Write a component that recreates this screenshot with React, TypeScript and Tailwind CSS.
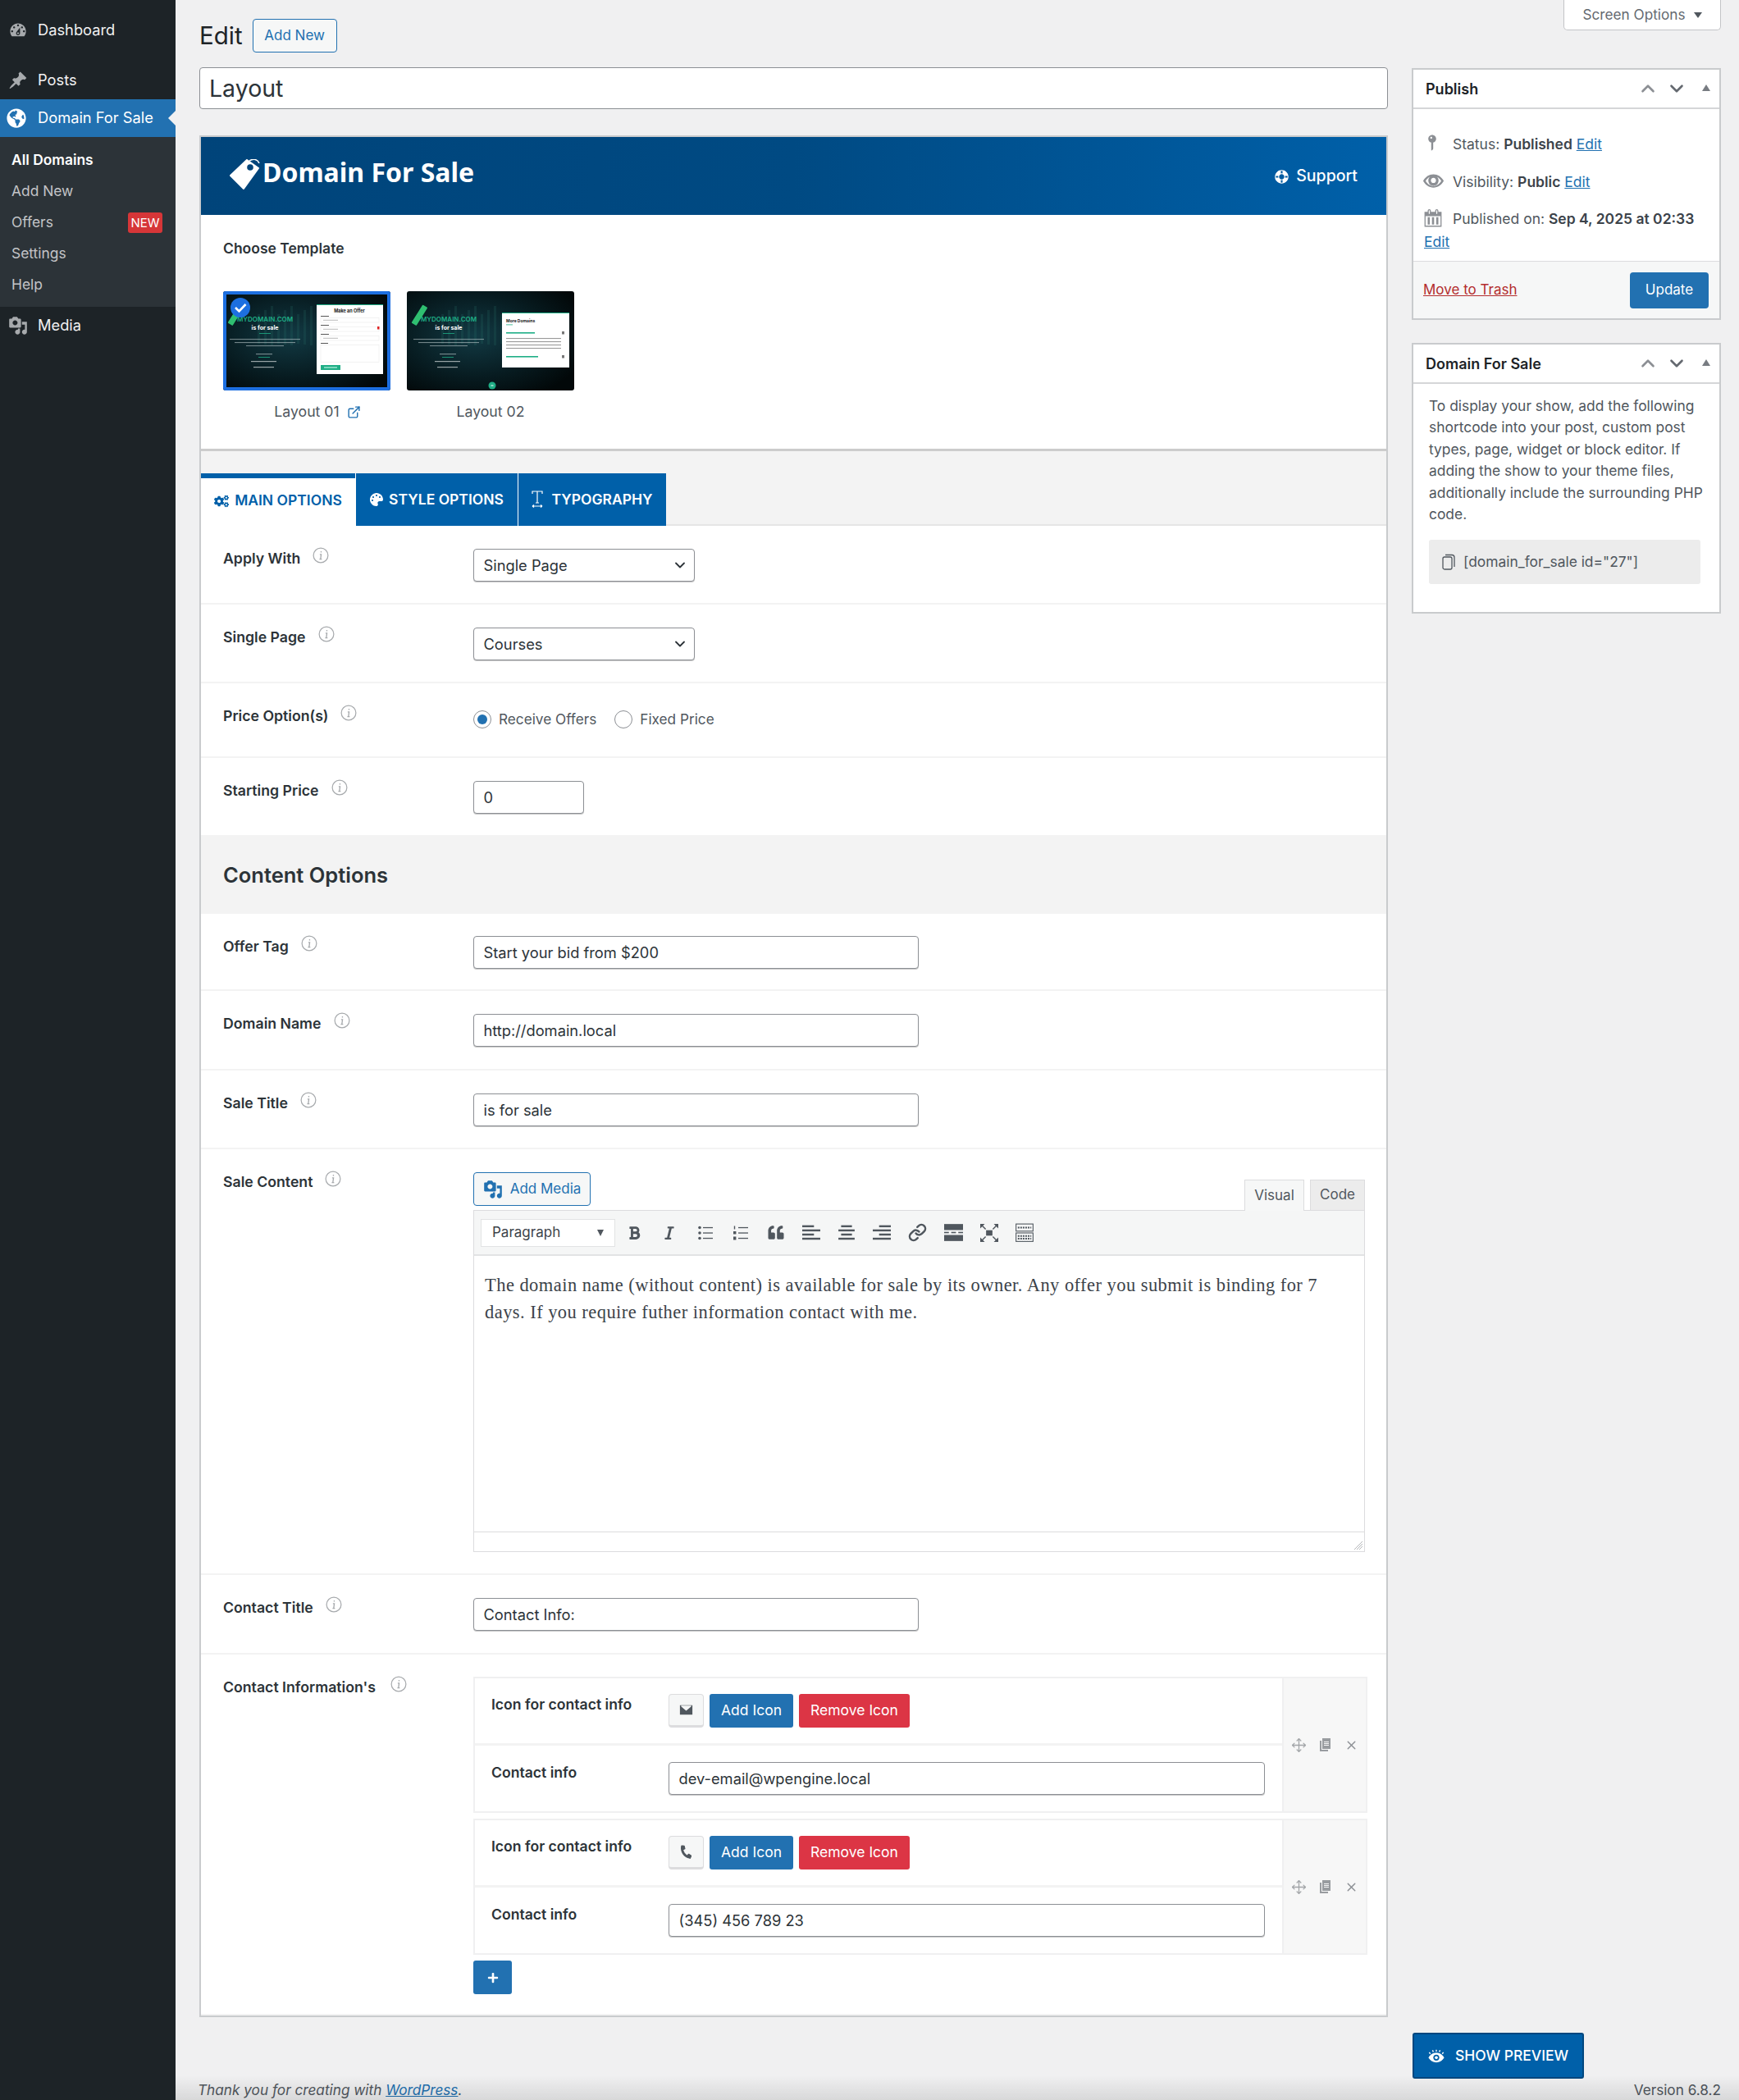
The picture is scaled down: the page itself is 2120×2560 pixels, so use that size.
import { ReactNode } from "react";
import { FaGlobeAmericas, FaLifeRing, FaCogs, FaPalette, FaQuoteLeft, FaBold, FaItalic, FaPlus, FaPhone } from "react-icons/fa";
import { ChevronDown, ChevronUp, ExternalLink, Link as LinkIcon, Move, X } from "lucide-react";

const dashPaths = {
  dashboard:
    "M3.76 16h12.48c1.1-1.37 1.76-3.11 1.76-5 0-4.42-3.58-8-8-8s-8 3.58-8 8c0 1.89.66 3.63 1.76 5zM10 4c.55 0 1 .45 1 1s-.45 1-1 1-1-.45-1-1 .45-1 1-1zM6 6c.55 0 1 .45 1 1s-.45 1-1 1-1-.45-1-1 .45-1 1-1zm8 0c.55 0 1 .45 1 1s-.45 1-1 1-1-.45-1-1 .45-1 1-1zm-5.37 5.55L12 7v6c0 1.1-.9 2-2 2s-2-.9-2-2c0-.57.24-1.08.63-1.45zM4 10c.55 0 1 .45 1 1s-.45 1-1 1-1-.45-1-1 .45-1 1-1zm12 0c.55 0 1 .45 1 1s-.45 1-1 1-1-.45-1-1 .45-1 1-1zm-5 3c0-.55-.45-1-1-1s-1 .45-1 1 .45 1 1 1 1-.45 1-1z",
  post: "M10.44 3.02l1.82-1.82 6.36 6.35-1.83 1.82c-1.05-.68-2.48-.57-3.41.36l-.75.75c-.92.93-1.04 2.35-.35 3.41l-1.83 1.82-2.41-2.41-2.8 2.79c-.42.42-3.38 2.71-3.8 2.29s1.86-3.39 2.28-3.81l2.79-2.79L4.1 9.36l1.83-1.82c1.05.69 2.48.57 3.4-.36l.75-.75c.93-.92 1.05-2.35.36-3.41z",
  media:
    "M13 11V4c0-.55-.45-1-1-1h-1.67L9 1H5L3.67 3H2c-.55 0-1 .45-1 1v7c0 .55.45 1 1 1h10c.55 0 1-.45 1-1zM7 4.5c1.38 0 2.5 1.12 2.5 2.5S8.38 9.5 7 9.5 4.5 8.38 4.5 7 5.62 4.5 7 4.5zM14 6h5v10.5c0 1.38-1.12 2.5-2.5 2.5S14 17.88 14 16.5s1.12-2.5 2.5-2.5c.17 0 .34.02.5.05V9h-3V6zm-4 8.05V13h2v3.5c0 1.38-1.12 2.5-2.5 2.5S7 17.88 7 16.5 8.12 14 9.5 14c.17 0 .34.02.5.05z",
  pin: "M14 6c0 1.86-1.28 3.41-3 3.86V16c0 1-2 2-2 2V9.86c-1.72-.45-3-2-3-3.86 0-2.21 1.79-4 4-4s4 1.79 4 4zM8 5c0 .55.45 1 1 1s1-.45 1-1-.45-1-1-1-1 .45-1 1z",
  eye: "M19.7 9.4C17.7 6 14.32 3.5 10 3.5S2.3 6 .3 9.4L0 10l.3.6c2 3.4 5.38 5.9 9.7 5.9s7.7-2.5 9.7-5.9l.3-.6zM10 15c-3.1 0-5.9-1.9-7.6-5 1-1.8 2.4-3.2 4.1-4.1-.9.9-1.5 2.2-1.5 3.6C5 12.5 7.2 14.7 10 14.7s5-2.2 5-5.2c0-1.4-.6-2.7-1.5-3.6 1.7.9 3.1 2.3 4.1 4.1-1.7 3.1-4.5 5-7.6 5zM10 12c-1.5 0-2.5-1.1-2.5-2.5S8.5 7 10 7s2.5 1.1 2.5 2.5S11.5 12 10 12z",
  calendar:
    "M15 4h3v14H2V4h3V3c0-.83.67-1.5 1.5-1.5S8 2.17 8 3v1h4V3c0-.83.67-1.5 1.5-1.5S15 2.17 15 3v1zM6 3v2.5c0 .28.22.5.5.5S7 5.78 7 5.5V3c0-.28-.22-.5-.5-.5S6 2.72 6 3zm7 0v2.5c0 .28.22.5.5.5s.5-.22.5-.5V3c0-.28-.22-.5-.5-.5s-.5.22-.5.5zm4 14V8H3v9h14zM7 16V9H5v7h2zm4 0V9H9v7h2zm4 0V9h-2v7h2z",
  copy: "M6 15V2h10v13H6zm-1 1h8v2H3V5h2v11zM8 7h6V6H8v1zm0 2h6V8H8v1zm0 2h6v-1H8v1z",
};

function Dash({ d, className }: { d: string; className?: string }) {
  return (
    <svg viewBox="0 0 20 20" fill="currentColor" className={className}>
      <path d={d} />
    </svg>
  );
}

function InfoIcon() {
  return (
    <svg viewBox="0 0 18 18" className="w-[20px] h-[20px] text-[#a7aaad]" fill="none" stroke="currentColor">
      <circle cx="9" cy="9" r="8" strokeWidth="1.1" />
      <path d="M9.4 4.4v1.4M8 8h1.5l-.7 5.2H7.6M8.8 13.2h1.4" strokeWidth="1.2" />
    </svg>
  );
}

function Bars({ rows }: { rows: [number, number][] }) {
  return (
    <svg viewBox="0 0 20 20" className="w-[22px] h-[22px]" fill="#50575e">
      {rows.map(([x, w], i) => (
        <rect key={i} x={x} y={1.5 + i * 4.6} width={w} height="2.2" />
      ))}
    </svg>
  );
}

function ToolbarIcons() {
  return (
    <div className="flex items-center text-[#50575e]">
      <div className="w-[30px] flex justify-center"><FaBold className="w-[15px] h-[18px]" /></div>
      <div className="w-[12px]" />
      <div className="w-[32px] flex justify-center"><FaItalic className="w-[14px] h-[18px]" /></div>
      <div className="w-[43px] flex justify-center ml-[6px]">
        <svg viewBox="0 0 20 20" className="w-[20px] h-[20px]" fill="#50575e">
          <circle cx="3" cy="3.5" r="1.8" /><circle cx="3" cy="10" r="1.8" /><circle cx="3" cy="16.5" r="1.8" />
          <rect x="7" y="2.9" width="12" height="1.3" /><rect x="7" y="9.4" width="12" height="1.3" /><rect x="7" y="15.9" width="12" height="1.3" />
        </svg>
      </div>
      <div className="w-[43px] flex justify-center">
        <svg viewBox="0 0 20 20" className="w-[20px] h-[20px]" fill="#50575e">
          <rect x="1.8" y="1.5" width="1.4" height="4" /><rect x="1" y="8" width="3.4" height="3.5" /><rect x="1" y="14.5" width="3.4" height="4" />
          <rect x="7" y="2.9" width="12" height="1.3" /><rect x="7" y="9.4" width="12" height="1.3" /><rect x="7" y="15.9" width="12" height="1.3" />
        </svg>
      </div>
      <div className="w-[43px] flex justify-center"><FaQuoteLeft className="w-[22px] h-[19px]" /></div>
      <div className="w-[43px] flex justify-center"><Bars rows={[[0, 13], [0, 20], [0, 13], [0, 20]]} /></div>
      <div className="w-[43px] flex justify-center"><Bars rows={[[4, 12], [1, 18], [4, 12], [1, 18]]} /></div>
      <div className="w-[43px] flex justify-center"><Bars rows={[[7, 13], [0, 20], [7, 13], [0, 20]]} /></div>
      <div className="w-[44px] flex justify-center"><LinkIcon className="w-[23px] h-[23px]" strokeWidth={2.6} /></div>
      <div className="w-[44px] flex justify-center">
        <svg viewBox="0 0 20 20" className="w-[23px] h-[23px]" fill="#50575e">
          <rect x="0" y="1" width="20" height="6.4" /><rect x="0" y="9.3" width="5" height="1.4" /><rect x="7.5" y="9.3" width="5" height="1.4" /><rect x="15" y="9.3" width="5" height="1.4" /><rect x="0" y="12.6" width="20" height="6.4" />
        </svg>
      </div>
      <div className="w-[43px] flex justify-center">
        <svg viewBox="0 0 20 20" className="w-[22px] h-[22px]" fill="#50575e" stroke="#50575e">
          <rect x="6.5" y="7" width="7" height="6" stroke="none" />
          <path d="M1 1l5 5M19 1l-5 5M1 19l5-5M19 19l-5-5" strokeWidth="1.3" fill="none" />
          <path d="M0 0h5L0 5zM20 0h-5l5 5zM0 20h5l-5-5zM20 20h-5l5-5z" stroke="none" />
        </svg>
      </div>
      <div className="w-[43px] flex justify-center">
        <svg viewBox="0 0 20 22" className="w-[22px] h-[24px]" fill="none" stroke="#50575e">
          <rect x="0.5" y="1" width="19" height="8" strokeWidth="1" />
          <rect x="0.5" y="11" width="19" height="9.5" strokeWidth="1" />
          <path d="M2.5 5h15M2.5 14.5h15M2.5 17.5h15" strokeWidth="1.8" strokeDasharray="1.8 1" />
        </svg>
      </div>
    </div>
  );
}

function Thumb({ kind, selected }: { kind: 1 | 2; selected?: boolean }) {
  return (
    <svg viewBox="0 0 204 121" className={`w-[204px] h-[121px] rounded-[3px] ${selected ? "outline-[4px] -outline-offset-4 outline-[#1d6fe0]" : ""}`}>
      <defs>
        <radialGradient id={`sc${kind}`} cx="0.4" cy="0.45" r="0.7">
          <stop offset="0" stopColor="#123a44" />
          <stop offset="0.6" stopColor="#071b20" />
          <stop offset="1" stopColor="#020809" />
        </radialGradient>
      </defs>
      <rect width="204" height="121" fill={`url(#sc${kind})`} />
      {[42, 50, 58, 66, 74, 82, 90, 98, 106, 114].map((x, i) => (
        <rect key={x} x={x} y={28 - (i % 3) * 5} width="3" height={36 + (i % 3) * 6} fill="#2a7c70" opacity="0.18" />
      ))}
      <rect x="2" y="26" width="26" height="7" rx="1" fill="#2fbf71" transform="rotate(-58 15 29)" />
      <text x="51" y="37" textAnchor="middle" fontSize="8" fontWeight="600" fill="#1fae86">MYDOMAIN.COM</text>
      <text x="51" y="47" textAnchor="middle" fontSize="7" fontWeight="700" fill="#ffffff">is for sale</text>
      <rect x="44" y="51" width="14" height="0.8" fill="#1fae86" />
      {[[8, 86, 58], [14, 74, 62], [28, 46, 66]].map(([x, w, y]) => (
        <rect key={y} x={x} y={y} width={w} height="1.1" fill="#b9c6c8" opacity="0.6" />
      ))}
      <rect x="40" y="76" width="20" height="1.2" fill="#b9c6c8" opacity="0.6" />
      <rect x="43" y="80" width="14" height="0.8" fill="#1fae86" />
      <rect x="34" y="85" width="31" height="1.2" fill="#d5dcdc" opacity="0.7" />
      <rect x="37" y="92" width="25" height="1.2" fill="#d5dcdc" opacity="0.7" />
      {kind === 1 ? (
        <>
          <rect x="114" y="16" width="81" height="85" fill="#ffffff" />
          <rect x="114" y="16" width="81" height="1" fill="#1fae86" />
          <text x="154" y="26" textAnchor="middle" fontSize="5.5" fontWeight="700" fill="#222222">Make an Offer</text>
          {[30, 41, 52].map((y) => (
            <g key={y}>
              <rect x="119" y={y} width="10" height="1" fill="#555555" />
              <rect x="119" y={y + 2.5} width="71" height="5.5" fill="none" stroke="#e5e5e5" strokeWidth="0.5" />
              <rect x="122" y={y + 4.8} width="18" height="1" fill="#bbbbbb" />
            </g>
          ))}
          <rect x="188" y="43" width="2.5" height="3.5" fill="#e02424" />
          <rect x="119" y="63" width="9" height="1" fill="#555555" />
          <rect x="119" y="65.5" width="71" height="21" fill="none" stroke="#e5e5e5" strokeWidth="0.5" />
          <rect x="119" y="90" width="24" height="6" fill="#1fae86" />
          <rect x="123" y="92.5" width="16" height="1" fill="#d8fff2" />
          <circle cx="21" cy="20" r="12" fill="#1d6fe0" />
        </>
      ) : (
        <>
          <rect x="116" y="26" width="82" height="67" fill="#ffffff" />
          <rect x="116" y="26" width="82" height="1" fill="#1fae86" />
          <text x="121" y="38" fontSize="5" fontWeight="700" fill="#222222">More Domains</text>
          <rect x="121" y="40.5" width="8" height="0.8" fill="#1fae86" />
          <rect x="121" y="50" width="35" height="1.6" fill="#1fae86" />
          <rect x="189" y="49" width="3" height="3.5" fill="#777777" />
          {[57, 61, 65, 69].map((y) => (
            <rect key={y} x="121" y={y} width="67" height="1.1" fill="#999999" />
          ))}
          <rect x="121" y="79" width="39" height="1.6" fill="#1fae86" />
          <rect x="189" y="78" width="3" height="3.5" fill="#777777" />
          <circle cx="104" cy="115" r="4.5" fill="#1fae86" />
          <rect x="102.5" y="114.5" width="3" height="1" fill="#ffffff" />
        </>
      )}
      {selected && <path d="M15 20l4.5 4.5 8-8.5" fill="none" stroke="#ffffff" strokeWidth="2.6" />}
    </svg>
  );
}

const inputCls =
  "block h-[40px] rounded-[4px] border border-[#8c8f94] bg-white px-[11.5px] text-[18.3px] leading-[38px] text-[#2c3338] shadow-[0_1px_0_#c9c9c9]";

function SelectBox({ value }: { value: string }) {
  return (
    <div className={`${inputCls} w-[270px] flex items-center justify-between`}>
      <span>{value}</span>
      <ChevronDown className="w-[20px] h-[20px] text-[#2c3338] -mr-[4px]" strokeWidth={2.2} />
    </div>
  );
}

function Field({ value, wide }: { value: string; wide?: boolean }) {
  return <div className={`${inputCls} ${wide ? "w-[727px]" : "w-[543px]"}`}>{value}</div>;
}

function Row({ label, infoGap = "ml-[15px]", className, children }: { label: string; infoGap?: string; className: string; children: ReactNode }) {
  return (
    <div className={`flex border-b-[2px] border-[#f3f3f3] pl-[27px] pt-[28px] ${className}`}>
      <div className="w-[305px] flex items-start shrink-0 -mt-[1px]">
        <span className="text-[17.7px] leading-[26px] font-semibold text-[#2c3338]">{label}</span>
        <span className={`${infoGap} -mt-[1px]`}>
          <InfoIcon />
        </span>
      </div>
      {children}
    </div>
  );
}

function SideBox({ title, children, className }: { title: string; children: ReactNode; className?: string }) {
  return (
    <section className={`border-2 border-[#c9cbcd] bg-white ${className ?? ""}`}>
      <div className="h-[48px] border-b-2 border-[#d5d6d8] flex items-center pl-[15px] pr-[11px]">
        <h2 className="text-[18px] font-semibold text-[#1d2327] flex-1">{title}</h2>
        <ChevronUp className="w-[26px] h-[26px] text-[#8c8f94] mr-[9px]" strokeWidth={2.4} />
        <ChevronDown className="w-[26px] h-[26px] text-[#646970]" strokeWidth={2.4} />
        <span className="ml-[18px] mb-[2px] w-0 h-0 border-x-[5.5px] border-x-transparent border-b-[8px] border-b-[#787c82]" />
      </div>
      {children}
    </section>
  );
}

function ContactGroup({ icon, value }: { icon: ReactNode; value: string }) {
  return (
    <div className="flex border-2 border-[#f0f0f1] w-[1090px] h-[166px]">
      <div className="flex-1 flex flex-col">
        <div className="h-[82px] border-b-[3px] border-[#f3f3f3] flex pl-[20px] pt-[19px] shrink-0">
          <span className="w-[216px] text-[17.6px] leading-[26px] font-semibold text-[#2c3338]">Icon for contact info</span>
          <div className="flex gap-[7px]">
            <div className="w-[43px] h-[41px] rounded-[4px] border border-[#dcdcde] border-b-[3px] bg-[#f6f7f7] flex items-center justify-center text-[#50575e]">{icon}</div>
            <button className="w-[102px] h-[41px] rounded-[3px] bg-[#2271b1] text-white text-[17.5px]">Add Icon</button>
            <button className="w-[135px] h-[41px] rounded-[3px] bg-[#dc3545] text-white text-[17.5px]">Remove Icon</button>
          </div>
        </div>
        <div className="flex pl-[20px] pt-[20px]">
          <span className="w-[216px] text-[17.6px] leading-[26px] font-semibold text-[#2c3338]">Contact info</span>
          <Field value={value} wide />
        </div>
      </div>
      <div className="w-[102px] border-l-2 border-[#f0f0f1] bg-[#f7f7f7] flex items-center justify-center gap-[13px] text-[#a2a5a8]">
        <Move className="w-[19px] h-[19px]" strokeWidth={1.6} />
        <Dash d={dashPaths.copy} className="w-[20px] h-[20px] text-[#999ca0]" />
        <X className="w-[17px] h-[17px] text-[#8c8f94]" strokeWidth={2} />
      </div>
    </div>
  );
}

function MenuItem({ icon, label, className }: { icon: ReactNode; label: string; className: string }) {
  return (
    <div className={`flex items-center text-[18.3px] text-[#f0f0f1] ${className}`}>
      <span className="w-[46px] pl-[10px] flex text-[#a7aaad]">{icon}</span>
      {label}
    </div>
  );
}

export default function App() {
  return (
    <div className="flex w-[2120px] h-[2560px] overflow-hidden bg-[#f0f0f1] font-[Inter,sans-serif] text-[#3c434a]">
      <aside className="w-[214px] shrink-0 bg-[#1d2327]">
        <MenuItem className="h-[40px] mt-[17px]" icon={<Dash d={dashPaths.dashboard} className="w-[24px] h-[24px]" />} label="Dashboard" />
        <MenuItem className="h-[40px] mt-[21px] mb-[3px]" icon={<Dash d={dashPaths.post} className="w-[24px] h-[24px]" />} label="Posts" />
        <div className="relative h-[46px] bg-[#2271b1] flex items-center text-[18.3px] text-white">
          <span className="w-[46px] pl-[8px] flex"><FaGlobeAmericas className="w-[24px] h-[24px]" /></span>
          Domain For Sale
          <span className="absolute right-0 top-[14px] w-0 h-0 border-y-[9px] border-y-transparent border-r-[9px] border-r-[#f0f0f1]" />
        </div>
        <nav className="h-[207px] bg-[#2c3338] pt-[9px] pl-[14px] text-[17.4px] leading-[38px] text-[#c3c4c7]">
          <div className="font-semibold text-white">All Domains</div>
          <div>Add New</div>
          <div className="flex items-center justify-between pr-[16px] h-[38px]">
            <span>Offers</span>
            <span className="w-[42px] h-[25px] rounded-[3px] bg-[#d63638] text-white text-[15px] leading-[25px] text-center">NEW</span>
          </div>
          <div>Settings</div>
          <div>Help</div>
        </nav>
        <MenuItem className="h-[40px] mt-[3px]" icon={<Dash d={dashPaths.media} className="w-[24px] h-[24px]" />} label="Media" />
      </aside>

      <main className="relative flex-1 pl-[29px] min-w-0">
        <header className="h-[82px] flex items-start">
          <h1 className="mt-[23px] text-[29.5px] leading-[40px] text-[#1d2327]">Edit</h1>
          <button className="mt-[23px] ml-[12px] w-[103px] h-[41px] rounded-[4px] border border-[#2271b1] bg-[#f6f7f7] text-[17px] text-[#2271b1]">Add New</button>
          <div className="ml-auto mr-[22px] w-[192px] h-[37px] bg-white border border-t-0 border-[#c3c4c7] rounded-b-[5px] flex items-center justify-center gap-[10px] text-[17.2px] text-[#646970]">
            Screen Options
            <span className="w-0 h-0 border-x-[5.5px] border-x-transparent border-t-[7px] border-t-[#50575e]" />
          </div>
        </header>

        <div className="flex gap-[29px] pr-[22px]">
          <div className="w-[1449px] shrink-0">
            <div className="h-[51px] rounded-[4px] border border-[#8c8f94] bg-white pl-[11px] text-[28.5px] leading-[50px] text-[#2c3338]">Layout</div>

            <section className="mt-[32px] border-2 border-[#c9cbcd] bg-white">
              <div className="h-[95px] flex items-center justify-between pl-[35px] pr-[35px] bg-gradient-to-r from-[#00447a] via-[#004a83] to-[#0060a9]">
                <div className="flex items-start text-white -mt-[7px]">
                  <svg viewBox="0 0 40 38" className="w-[40px] h-[38px] mt-[3px]">
                    <path d="M21 1 35 11 17 36 1 20z" fill="#ffffff" stroke="#ffffff" strokeWidth="2" strokeLinejoin="round" />
                    <circle cx="25" cy="10" r="3.8" fill="#00447a" />
                    <path d="M24 2c5-3 10-2 12 3" fill="none" stroke="#ffffff" strokeWidth="1.5" />
                  </svg>
                  <span className="font-['Noto_Sans',sans-serif] text-[32px] leading-[44px] font-bold -mt-[3px]">Domain For Sale</span>
                </div>
                <div className="flex items-center gap-[9px] text-[19.5px] font-medium text-white mt-[1px]">
                  <FaLifeRing className="w-[17px] h-[17px] rotate-45" />
                  Support
                </div>
              </div>

              <div className="h-[288px] pt-[29px] pl-[27px] border-b-[3px] border-[#cccccc]">
                <div className="text-[17.5px] leading-[24px] font-semibold text-[#2c3338]">Choose Template</div>
                <div className="flex gap-[20px] mt-[40px]">
                  <div className="w-[204px]">
                    <Thumb kind={1} selected />
                    <div className="mt-[14px] flex items-center justify-center gap-[9px] pl-[26px] text-[17.7px] leading-[24px] text-[#50575e]">
                      Layout 01
                      <ExternalLink className="w-[17px] h-[17px] text-[#2271b1]" strokeWidth={2} />
                    </div>
                  </div>
                  <div className="w-[204px]">
                    <Thumb kind={2} />
                    <div className="mt-[14px] text-center text-[17.7px] leading-[24px] text-[#50575e]">Layout 02</div>
                  </div>
                </div>
              </div>

              <div className="h-[91px] bg-[#f3f3f3] pt-[27px] flex items-stretch border-b-2 border-[#e5e5e5] text-[17.5px] font-semibold">
                <div className="w-[188px] h-[64px] bg-white border-t-[6px] border-[#0060a9] text-[#0060a9] flex items-center justify-center gap-[7px] pb-[3px]">
                  <FaCogs className="w-[18px] h-[18px]" />
                  MAIN OPTIONS
                </div>
                <div className="w-[198px] h-[64px] bg-[#0060a9] border-l border-white text-white flex items-center justify-center gap-[7px]">
                  <FaPalette className="w-[16px] h-[16px]" />
                  STYLE OPTIONS
                </div>
                <div className="w-[181px] h-[64px] bg-[#0060a9] border-l border-white text-white flex items-center justify-center gap-[10px]">
                  <svg viewBox="0 0 14 22" className="w-[14px] h-[22px]" fill="none" stroke="#ffffff" strokeWidth="1.2">
                    <path d="M1 4V1h12v3M7 1v14M5 15h4M1 19h12M1 19l2-1.5M1 19l2 1.5M13 19l-2-1.5M13 19l-2 1.5" />
                  </svg>
                  TYPOGRAPHY
                </div>
              </div>

              <Row label="Apply With" className="h-[96px]">
                <SelectBox value="Single Page" />
              </Row>
              <Row label="Single Page" className="h-[96px]">
                <SelectBox value="Courses" />
              </Row>
              <Row label="Price Option(s)" className="h-[91px]">
                <div className="flex items-center text-[17.2px] text-[#50575e] mt-[5px] h-[22px]">
                  <span className="w-[22px] h-[22px] rounded-full border border-[#8c8f94] bg-white flex items-center justify-center">
                    <span className="w-[12px] h-[12px] rounded-full bg-[#2271b1]" />
                  </span>
                  <span className="ml-[9px]">Receive Offers</span>
                  <span className="ml-[22px] w-[22px] h-[22px] rounded-full border border-[#8c8f94] bg-white" />
                  <span className="ml-[9px]">Fixed Price</span>
                </div>
              </Row>
              <Row label="Starting Price" className="h-[96px]">
                <div className={`${inputCls} w-[135px]`}>0</div>
              </Row>

              <div className="h-[94px] bg-[#f3f3f3] pl-[27px] flex items-center">
                <h2 className="text-[25.5px] font-semibold text-[#2c3338]">Content Options</h2>
              </div>

              <Row label="Offer Tag" className="h-[94px]">
                <div className="-mt-[1px]">
                  <Field value="Start your bid from $200" />
                </div>
              </Row>
              <Row label="Domain Name" className="h-[97px]">
                <Field value="http://domain.local" />
              </Row>
              <Row label="Sale Title" className="h-[96px]">
                <Field value="is for sale" />
              </Row>

              <Row label="Sale Content" className="h-[519px]">
                <div className="w-[1087px]">
                  <div className="h-[46px] flex items-start justify-between">
                    <button className="w-[143px] h-[41px] rounded-[4px] border border-[#2271b1] bg-[#f6f7f7] text-[#2271b1] text-[17px] flex items-center justify-center gap-[9px]">
                      <Dash d={dashPaths.media} className="w-[24px] h-[24px]" />
                      Add Media
                    </button>
                    <div className="flex items-end gap-[7px] h-full text-[17px] text-[#50575e]">
                      <div className="w-[73px] h-[38px] -mb-[1px] bg-[#f6f7f7] border border-b-0 border-[#dcdcde] flex items-center justify-center relative">Visual</div>
                      <div className="w-[67px] h-[37px] bg-[#ececec] border border-b-0 border-[#dcdcde] flex items-center justify-center">Code</div>
                    </div>
                  </div>
                  <div className="border border-[#dcdcde]">
                    <div className="h-[55px] bg-[#f5f6f6] border-b-2 border-[#e2e3e4] flex items-center pl-[8px]">
                      <div className="w-[164px] h-[34px] bg-white border border-[#e2e3e4] flex items-center justify-between px-[13px] text-[17px] text-[#3c434a]">
                        Paragraph
                        <span className="w-0 h-0 border-x-[4.5px] border-x-transparent border-t-[8px] border-t-[#50575e]" />
                      </div>
                      <div className="ml-[8px]">
                        <ToolbarIcons />
                      </div>
                    </div>
                    <div className="h-[336px] bg-white pl-[13px] pr-[50px] pt-[19px] font-['Liberation_Serif',serif] text-[22.5px] tracking-[0.45px] leading-[33px] text-[#3c434a]">
                      The domain name (without content) is available for sale by its owner. Any offer you submit is binding for 7 days. If you require futher information contact with me.
                    </div>
                    <div className="h-[24px] border-t border-[#dcdcde] bg-white flex justify-end items-end">
                      <svg viewBox="0 0 12 12" className="w-[12px] h-[12px] mb-[1px] mr-[1px]" stroke="#b5b7ba" strokeWidth="1">
                        <path d="M11 1 1 11M11 4 4 11M11 7 7 11" />
                      </svg>
                    </div>
                  </div>
                </div>
              </Row>

              <Row label="Contact Title" className="h-[97px]">
                <Field value="Contact Info:" />
              </Row>
              <Row label="Contact Information's" infoGap="ml-[18px]" className="h-[440px] border-b-0">
                <div className="-mt-[1px]">
                  <ContactGroup value="dev-email@wpengine.local" icon={
                    <svg viewBox="0 0 20 20" className="w-[19px] h-[19px]" fill="currentColor">
                      <path d="M2 4h16v12H2zM3.5 5.5 10 11l6.5-5.5v-1h-13z" fillRule="evenodd" />
                    </svg>
                  } />
                  <div className="h-[7px]" />
                  <ContactGroup value="(345) 456 789 23" icon={<FaPhone className="w-[15px] h-[15px] rotate-[100deg]" />} />
                  <button className="mt-[7px] w-[47px] h-[41px] rounded-[3px] bg-[#2271b1] text-white flex items-center justify-center">
                    <FaPlus className="w-[14px] h-[14px]" />
                  </button>
                </div>
              </Row>
            </section>
          </div>

          <div className="w-[377px] shrink-0">
            <SideBox title="Publish" className="mt-px">
              <div className="h-[185px] pl-[13px] pr-[10px] pt-[29px] text-[17.5px] leading-[27px] text-[#50575e]">
                <div className="h-[46px] flex items-start">
                  <span className="w-[35px] flex"><Dash d={dashPaths.pin} className="w-[24px] h-[24px] text-[#8c8f94] -ml-[2px]" /></span>
                  <span>Status: <b className="font-semibold text-[#3c434a]">Published</b> <a className="underline text-[#2271b1]">Edit</a></span>
                </div>
                <div className="h-[45px] flex items-start">
                  <span className="w-[35px] flex"><Dash d={dashPaths.eye} className="w-[25px] h-[25px] text-[#8c8f94] -ml-[1px]" /></span>
                  <span>Visibility: <b className="font-semibold text-[#3c434a]">Public</b> <a className="underline text-[#2271b1]">Edit</a></span>
                </div>
                <div className="flex items-start">
                  <span className="w-[35px] flex"><Dash d={dashPaths.calendar} className="w-[26px] h-[26px] text-[#8c8f94] -ml-[2px]" /></span>
                  <span>Published on: <b className="font-semibold text-[#3c434a]">Sep 4, 2025 at 02:33</b></span>
                </div>
                <a className="block mt-[1px] underline text-[#2271b1]">Edit</a>
              </div>
              <div className="h-[70px] border-t border-[#dcdcde] bg-[#f6f7f7] flex items-center justify-between pl-[12px] pr-[13px]">
                <a className="underline text-[17px] text-[#b32d2e]">Move to Trash</a>
                <button className="w-[96px] h-[44px] rounded-[4px] bg-[#2271b1] text-white text-[17px]">Update</button>
              </div>
            </SideBox>

            <SideBox title="Domain For Sale" className="mt-[28px]">
              <div className="h-[278px] pl-[19px] pr-[23px] pt-[14px]">
                <p className="text-[17.4px] leading-[26.4px] text-[#50575e] -mr-[6px]">
                  To display your show, add the following shortcode into your post, custom post types, page, widget or block editor. If adding the show to your theme files, additionally include the surrounding PHP code.
                </p>
                <div className="mt-[18px] h-[54px] rounded-[3px] bg-[#ececec] flex items-center pl-[16px] gap-[10px] text-[17.4px] text-[#50575e]">
                  <svg viewBox="0 0 16 20" className="w-[16px] h-[20px]" fill="none" stroke="#50575e" strokeWidth="1.3">
                    <rect x="1" y="4" width="11" height="15" rx="2" />
                    <path d="M4 1.5h8a3 3 0 0 1 3 3V16" />
                  </svg>
                  [domain_for_sale id="27"]
                </div>
              </div>
            </SideBox>
          </div>
        </div>

        <div className="flex justify-end pr-[189px] mt-[19px]">
          <button className="w-[209px] h-[56px] rounded-[3px] bg-[#0060a9] border-2 border-[#00477f] text-white text-[17.5px] font-medium flex items-center justify-center gap-[13px]">
            <svg viewBox="0 0 22 18" className="w-[20px] h-[17px]" fill="none" stroke="#ffffff">
              <path d="M1 11c2-4 6-6 10-6s8 2 10 6c-2 4-6 6-10 6S3 15 1 11z" fill="#ffffff" strokeWidth="1" />
              <circle cx="11" cy="11" r="4" fill="#0060a9" stroke="none" />
              <circle cx="11" cy="11" r="2" fill="#ffffff" stroke="none" />
              <path d="M3 6 1.5 4M7 3.5 6 1M11 3V.5M15 3.5 16 1M19 6l1.5-2" strokeWidth="1.5" />
            </svg>
            SHOW PREVIEW
          </button>
        </div>
        <footer className="-ml-[2px] pr-[22px] flex justify-between items-center h-[28px] text-[17.2px] text-[#50575e]">
          <span className="italic">Thank you for creating with <a className="underline text-[#2271b1]">WordPress</a>.</span>
          <span>Version 6.8.2</span>
        </footer>
        <div className="absolute inset-x-0 bottom-0 h-[30px] bg-gradient-to-t from-black/10 to-transparent pointer-events-none" />
      </main>
    </div>
  );
}
